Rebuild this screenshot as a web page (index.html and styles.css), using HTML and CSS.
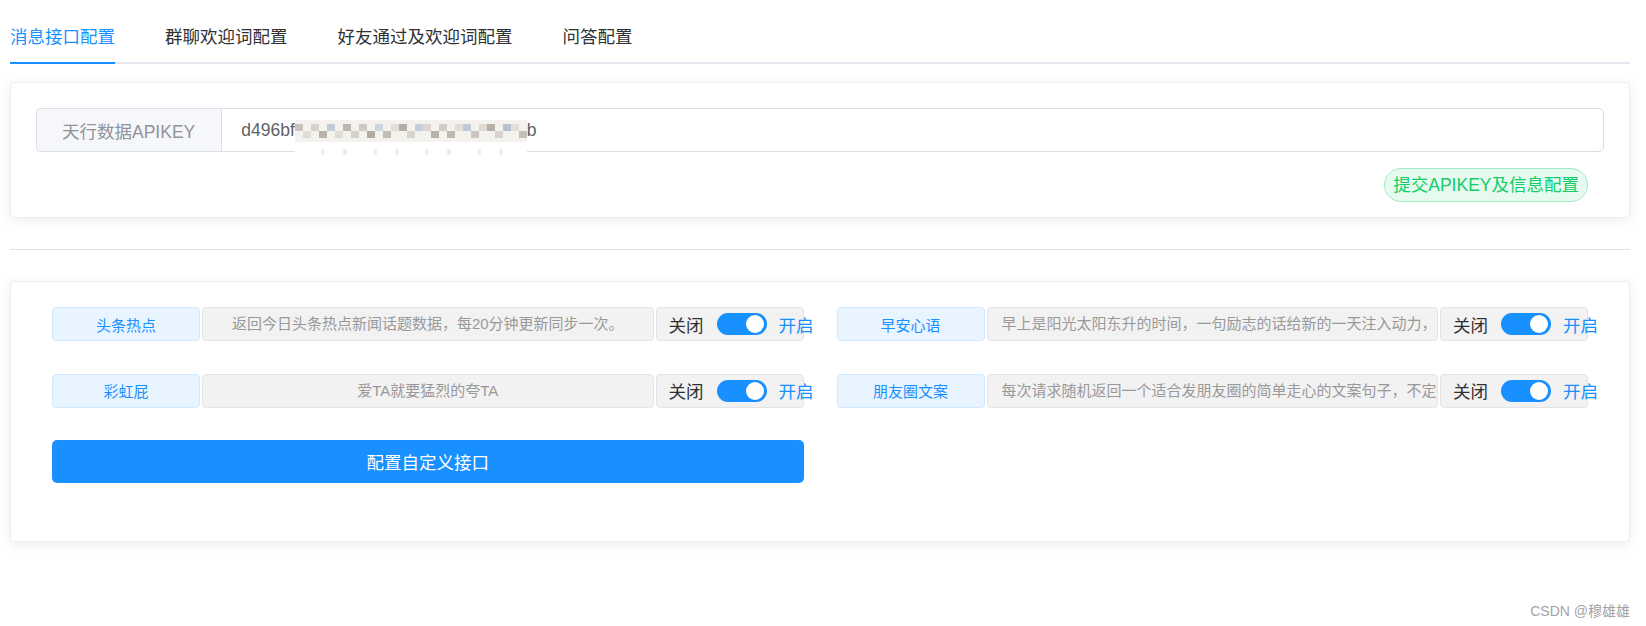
FILE: index.html
```html
<!DOCTYPE html>
<html lang="zh-CN">
<head>
<meta charset="utf-8">
<title>消息接口配置</title>
<link rel="stylesheet" href="styles.css">
</head>
<body>
<div class="page">
  <div class="tabs">
    <div class="tab active">消息接口配置</div>
    <div class="tab">群聊欢迎词配置</div>
    <div class="tab">好友通过及欢迎词配置</div>
    <div class="tab">问答配置</div>
  </div>

  <div class="card card-key">
    <div class="input-group">
      <div class="prepend">天行数据APIKEY</div>
      <div class="input-value">
        <span>d496bf</span><svg class="mosaic" width="232" height="22" viewBox="0 0 232 22">
          <rect x="0" y="0" width="232" height="22" fill="#f4f2ef"/>
          <rect x="0" y="4" width="8" height="7" fill="#c9c3bc"/><rect x="16" y="4" width="8" height="7" fill="#d8d2cb"/><rect x="24" y="11" width="8" height="7" fill="#b9b3ac"/><rect x="32" y="4" width="8" height="7" fill="#c3cad8"/><rect x="48" y="4" width="8" height="7" fill="#bdb7b0"/><rect x="56" y="11" width="8" height="7" fill="#d6d1ca"/><rect x="64" y="4" width="8" height="7" fill="#cfc9c2"/><rect x="72" y="11" width="8" height="7" fill="#b3aca5"/><rect x="80" y="4" width="8" height="7" fill="#cfd5e0"/><rect x="88" y="11" width="8" height="7" fill="#c2bcb5"/><rect x="104" y="4" width="8" height="7" fill="#b4aea7"/><rect x="112" y="11" width="8" height="7" fill="#d9d4ce"/><rect x="120" y="4" width="8" height="7" fill="#c6cddb"/><rect x="136" y="11" width="8" height="7" fill="#b8b1aa"/><rect x="144" y="4" width="8" height="7" fill="#d2ccc5"/><rect x="152" y="11" width="8" height="7" fill="#bfb9b2"/><rect x="168" y="4" width="8" height="7" fill="#c1c9d8"/><rect x="176" y="11" width="8" height="7" fill="#cbc5be"/><rect x="192" y="4" width="8" height="7" fill="#b6b0a9"/><rect x="200" y="11" width="8" height="7" fill="#d8d3cd"/><rect x="208" y="4" width="8" height="7" fill="#b9c1d0"/><rect x="224" y="11" width="8" height="7" fill="#c4beb7"/>
          <rect x="8" y="11" width="8" height="7" fill="#e1dcd6"/><rect x="40" y="11" width="8" height="7" fill="#e0dbd5"/><rect x="96" y="4" width="8" height="7" fill="#e3ded8"/><rect x="128" y="4" width="8" height="7" fill="#dcd7d1"/><rect x="160" y="4" width="8" height="7" fill="#e2ddd7"/><rect x="184" y="4" width="8" height="7" fill="#dfdad4"/><rect x="216" y="4" width="8" height="7" fill="#e4dfd9"/>
        </svg><span>b</span>
        <span class="mosaic-edge"></span>
      </div>
    </div>
    <div class="actions">
      <button class="btn-success">提交APIKEY及信息配置</button>
    </div>
  </div>

  <div class="divider"></div>

  <div class="card card-api">
    <div class="grid">
      <div class="item">
        <div class="label">头条热点</div>
        <div class="desc">返回今日头条热点新闻话题数据，每20分钟更新同步一次。</div>
        <div class="switch-box">
          <span class="off-text">关闭</span>
          <span class="switch"><span class="knob"></span></span>
          <span class="on-text">开启</span>
        </div>
      </div>
      <div class="item">
        <div class="label">早安心语</div>
        <div class="desc">早上是阳光太阳东升的时间，一句励志的话给新的一天注入动力，不负韶华，不负自己。</div>
        <div class="switch-box">
          <span class="off-text">关闭</span>
          <span class="switch"><span class="knob"></span></span>
          <span class="on-text">开启</span>
        </div>
      </div>
      <div class="item">
        <div class="label">彩虹屁</div>
        <div class="desc">爱TA就要猛烈的夸TA</div>
        <div class="switch-box">
          <span class="off-text">关闭</span>
          <span class="switch"><span class="knob"></span></span>
          <span class="on-text">开启</span>
        </div>
      </div>
      <div class="item">
        <div class="label">朋友圈文案</div>
        <div class="desc">每次请求随机返回一个适合发朋友圈的简单走心的文案句子，不定期更新。</div>
        <div class="switch-box">
          <span class="off-text">关闭</span>
          <span class="switch"><span class="knob"></span></span>
          <span class="on-text">开启</span>
        </div>
      </div>
      <button class="btn-primary">配置自定义接口</button>
    </div>
  </div>

  <div class="watermark">CSDN @穆雄雄</div>
</div>
</body>
</html>
```

FILE: styles.css
```css
* {
  box-sizing: border-box;
}

html, body {
  margin: 0;
  padding: 0;
  background: #ffffff;
}

body {
  font-family: "Liberation Sans", "Noto Sans CJK SC", sans-serif;
  color: #303133;
}

.page {
  position: relative;
  width: 1646px;
  height: 626px;
  padding: 12px 16px 0 10px;
}

/* Tabs */
.tabs {
  display: flex;
  border-bottom: 2px solid #e4e7ed;
}

.tab {
  position: relative;
  height: 50px;
  line-height: 50px;
  padding: 0 25px;
  font-size: 17.5px;
  color: #303133;
  white-space: nowrap;
}

.tab:first-child {
  padding-left: 0;
}

.tab.active {
  color: #1890ff;
}

.tab.active::after {
  content: "";
  position: absolute;
  left: 0;
  right: 25px;
  bottom: -2px;
  height: 2px;
  background: #1890ff;
}

/* Cards */
.card {
  border: 1px solid #ebeef5;
  border-radius: 5px;
  background: #fff;
  box-shadow: 0 2px 12px 0 rgba(0, 0, 0, 0.08);
}

.card-key {
  margin-top: 18px;
  padding: 25px 25px 15px;
}

.input-group {
  display: flex;
  height: 44px;
  font-size: 17.5px;
}

.prepend {
  display: flex;
  align-items: center;
  padding: 0 26px 0 25px;
  background: #f5f7fa;
  color: #909399;
  border: 1px solid #dcdfe6;
  border-right: 0;
  border-radius: 5px 0 0 5px;
  white-space: nowrap;
}

.input-value {
  position: relative;
  flex: 1;
  display: flex;
  align-items: center;
  padding: 0 19px;
  border: 1px solid #dcdfe6;
  border-radius: 0 5px 5px 0;
  color: #606266;
  white-space: nowrap;
}

.mosaic {
  display: block;
  flex: none;
  margin-top: 1px;
}

.mosaic-edge {
  position: absolute;
  left: 73px;
  bottom: -4px;
  width: 232px;
  height: 6px;
  background: repeating-linear-gradient(90deg, #ffffff 0 26px, #f1f1f1 26px 30px, #ffffff 30px 48px, #eeeeee 48px 52px);
}

.actions {
  display: flex;
  justify-content: flex-end;
  margin-top: 16px;
  padding-right: 16px;
}

.btn-success {
  height: 34px;
  padding: 0 8px;
  font-family: inherit;
  font-size: 17.5px;
  line-height: 32px;
  color: #13ce66;
  background: #e7faf0;
  border: 1px solid #a0ebc2;
  border-radius: 17px;
  white-space: nowrap;
}

.divider {
  height: 1px;
  background: #dcdfe6;
  margin: 31px 0;
}

.card-api {
  padding: 25px 25px 58px;
}

.grid {
  display: grid;
  grid-template-columns: minmax(0, 1fr) minmax(0, 1fr);
  column-gap: 33px;
  row-gap: 32.5px;
  padding: 0 16px;
}

.item {
  display: flex;
  gap: 2px;
  height: 34px;
  min-width: 0;
}

.label {
  flex: none;
  width: 148px;
  display: flex;
  align-items: center;
  justify-content: center;
  background: #e8f4ff;
  border: 1px solid #d1e9ff;
  border-radius: 4px;
  color: #1890ff;
  font-size: 15px;
}

.desc {
  flex: 1 1 0;
  min-width: 0;
  padding: 0 14px;
  background: #f2f2f2;
  border: 1px solid #e4e4e4;
  border-radius: 4px;
  color: #999999;
  font-size: 15px;
  line-height: 32px;
  text-align: center;
  white-space: nowrap;
  overflow: hidden;
}

.switch-box {
  flex: none;
  width: 148px;
  display: flex;
  align-items: center;
  padding-left: 12px;
  background: #f2f2f2;
  border: 1px solid #e4e4e4;
  border-radius: 4px;
  font-size: 17.5px;
  white-space: nowrap;
}

.off-text {
  flex: none;
  color: #303133;
}

.on-text {
  flex: none;
  color: #1890ff;
}

.switch {
  position: relative;
  flex: none;
  width: 50px;
  height: 22px;
  margin: 0 12px 0 13px;
  border-radius: 11px;
  background: #1890ff;
}

.knob {
  position: absolute;
  right: 3px;
  top: 2px;
  width: 18px;
  height: 18px;
  border-radius: 50%;
  background: #ffffff;
}

.btn-primary {
  grid-column: 1;
  height: 43px;
  font-family: inherit;
  font-size: 17.5px;
  color: #ffffff;
  background: #1890ff;
  border: 0;
  border-radius: 5px;
}

.watermark {
  position: absolute;
  right: 16px;
  top: 600px;
  font-size: 14px;
  color: #a3a3a3;
}
```
